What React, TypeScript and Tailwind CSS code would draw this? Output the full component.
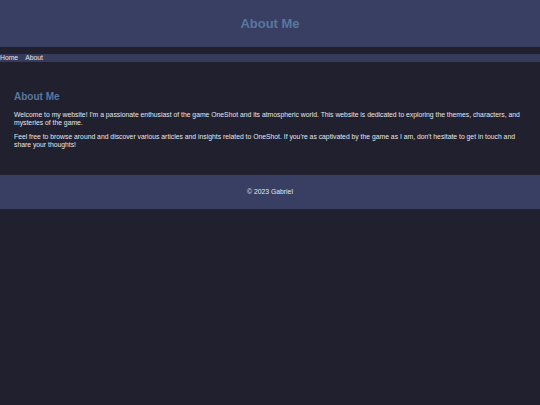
export default function App() {
  return (
    <div className="min-h-screen bg-[#20202f] font-['Liberation_Sans',Arial,sans-serif] text-[#e6e6ea]">
      <header className="flex h-[47px] items-center justify-center bg-[#393f63]">
        <h1 className="text-[13px] font-bold text-[#5a779f]">About Me</h1>
      </header>

      <nav className="mt-[7px] flex h-[8px] items-center gap-[7px] bg-[#363b5c] text-[6.8px] leading-none">
        <a href="#">Home</a>
        <a href="#">About</a>
      </nav>

      <main className="px-[14px] pt-[29px] pb-[26px]">
        <h2 className="text-[10px] font-bold leading-[12px] text-[#5a779f]">About Me</h2>
        <p className="mt-[8px] text-[6.8px] leading-[8px]">
          Welcome to my website! I'm a passionate enthusiast of the game OneShot and its atmospheric world. This website is dedicated to exploring the themes, characters, and mysteries of the game.
        </p>
        <p className="mt-[6px] text-[6.8px] leading-[8px]">
          Feel free to browse around and discover various articles and insights related to OneShot. If you're as captivated by the game as I am, don't hesitate to get in touch and share your thoughts!
        </p>
      </main>

      <footer className="flex h-[34px] items-center justify-center bg-[#393f63] text-[6.8px]">
        <p>© 2023 Gabriel</p>
      </footer>
    </div>
  );
}
